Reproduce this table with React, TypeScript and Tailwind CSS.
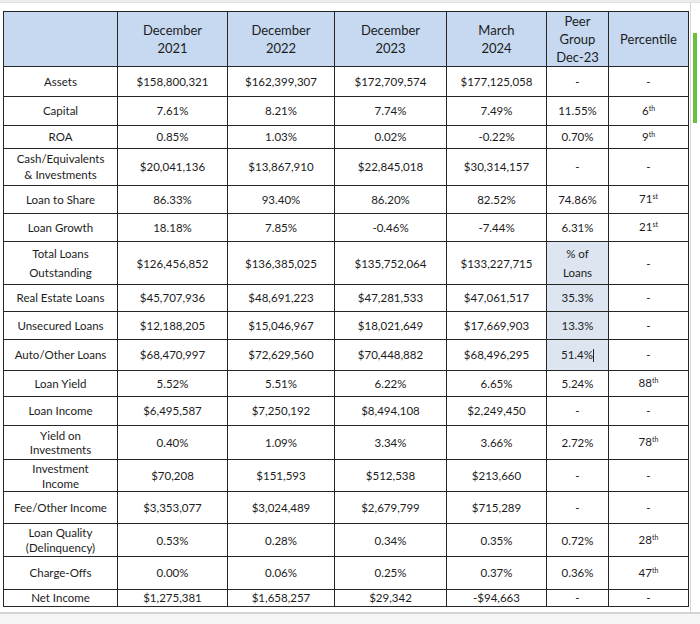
import React from "react";

type Row = {
  label: string[];
  vals: string[];
  peer: string[];
  pct: [string, string] | null;
  h: string;
  lh: string;
  hl?: boolean;
  cursor?: boolean;
};

const rows: Row[] = [
  { label: ["Assets"], vals: ["$158,800,321", "$162,399,307", "$172,709,574", "$177,125,058"], peer: ["-"], pct: null, h: "h-[30px]", lh: "leading-[16px]" },
  { label: ["Capital"], vals: ["7.61%", "8.21%", "7.74%", "7.49%"], peer: ["11.55%"], pct: ["6", "th"], h: "h-[29px]", lh: "leading-[16px]" },
  { label: ["ROA"], vals: ["0.85%", "1.03%", "0.02%", "-0.22%"], peer: ["0.70%"], pct: ["9", "th"], h: "h-[23px]", lh: "leading-[16px]" },
  { label: ["Cash/Equivalents", "& Investments"], vals: ["$20,041,136", "$13,867,910", "$22,845,018", "$30,314,157"], peer: ["-"], pct: null, h: "h-[37px]", lh: "leading-[16px]" },
  { label: ["Loan to Share"], vals: ["86.33%", "93.40%", "86.20%", "82.52%"], peer: ["74.86%"], pct: ["71", "st"], h: "h-[28px]", lh: "leading-[16px]" },
  { label: ["Loan Growth"], vals: ["18.18%", "7.85%", "-0.46%", "-7.44%"], peer: ["6.31%"], pct: ["21", "st"], h: "h-[28px]", lh: "leading-[16px]" },
  { label: ["Total Loans", "Outstanding"], vals: ["$126,456,852", "$136,385,025", "$135,752,064", "$133,227,715"], peer: ["% of", "Loans"], pct: null, h: "h-[43px]", lh: "leading-[19px]", hl: true },
  { label: ["Real Estate Loans"], vals: ["$45,707,936", "$48,691,223", "$47,281,533", "$47,061,517"], peer: ["35.3%"], pct: null, h: "h-[27px]", lh: "leading-[16px]", hl: true },
  { label: ["Unsecured Loans"], vals: ["$12,188,205", "$15,046,967", "$18,021,649", "$17,669,903"], peer: ["13.3%"], pct: null, h: "h-[28px]", lh: "leading-[16px]", hl: true },
  { label: ["Auto/Other Loans"], vals: ["$68,470,997", "$72,629,560", "$70,448,882", "$68,496,295"], peer: ["51.4%"], pct: null, h: "h-[31px]", lh: "leading-[16px]", hl: true, cursor: true },
  { label: ["Loan Yield"], vals: ["5.52%", "5.51%", "6.22%", "6.65%"], peer: ["5.24%"], pct: ["88", "th"], h: "h-[26px]", lh: "leading-[16px]" },
  { label: ["Loan Income"], vals: ["$6,495,587", "$7,250,192", "$8,494,108", "$2,249,450"], peer: ["-"], pct: null, h: "h-[29px]", lh: "leading-[16px]" },
  { label: ["Yield on", "Investments"], vals: ["0.40%", "1.09%", "3.34%", "3.66%"], peer: ["2.72%"], pct: ["78", "th"], h: "h-[34px]", lh: "leading-[14px]" },
  { label: ["Investment", "Income"], vals: ["$70,208", "$151,593", "$512,538", "$213,660"], peer: ["-"], pct: null, h: "h-[32px]", lh: "leading-[15px]" },
  { label: ["Fee/Other Income"], vals: ["$3,353,077", "$3,024,489", "$2,679,799", "$715,289"], peer: ["-"], pct: null, h: "h-[32px]", lh: "leading-[16px]" },
  { label: ["Loan Quality", "(Delinquency)"], vals: ["0.53%", "0.28%", "0.34%", "0.35%"], peer: ["0.72%"], pct: ["28", "th"], h: "h-[33px]", lh: "leading-[15px]" },
  { label: ["Charge-Offs"], vals: ["0.00%", "0.06%", "0.25%", "0.37%"], peer: ["0.36%"], pct: ["47", "th"], h: "h-[33px]", lh: "leading-[16px]" },
  { label: ["Net Income"], vals: ["$1,275,381", "$1,658,257", "$29,342", "-$94,663"], peer: ["-"], pct: null, h: "h-[17px]", lh: "leading-[14px]" },
];

const cell = "border border-[#262626] text-center align-middle p-0";

function Lines({ lines }: { lines: string[] }) {
  return (
    <>
      {lines.map((l, i) => (
        <div key={i}>{l}</div>
      ))}
    </>
  );
}

export default function App() {
  return (
    <div
      className="w-[700px] h-[624px] bg-white flex flex-col overflow-hidden text-[#1c1c1c]"
      style={{ fontFamily: "Lato, 'Open Sans', sans-serif" }}
    >
      <div className="h-[3px] bg-[#ececec] border-b border-[#e2e2e2]" />
      <div className="flex flex-row h-[609px]">
        <div className="pl-[3px] pt-[8px]">
          <table className="border-collapse table-fixed border-[1.5px] border-[#262626] text-[11.5px]">
            <colgroup>
              <col className="w-[114px]" />
              <col className="w-[110px]" />
              <col className="w-[107px]" />
              <col className="w-[112px]" />
              <col className="w-[100px]" />
              <col className="w-[62px]" />
              <col className="w-[80px]" />
            </colgroup>
            <thead>
              <tr className="h-[54px] bg-[#c6d9f0] text-[13px] leading-[18px]">
                <th className={cell + " font-normal"}></th>
                <th className={cell + " font-normal"}><Lines lines={["December", "2021"]} /></th>
                <th className={cell + " font-normal"}><Lines lines={["December", "2022"]} /></th>
                <th className={cell + " font-normal"}><Lines lines={["December", "2023"]} /></th>
                <th className={cell + " font-normal"}><Lines lines={["March", "2024"]} /></th>
                <th className={cell + " font-normal"}><Lines lines={["Peer", "Group", "Dec-23"]} /></th>
                <th className={cell + " font-normal"}>Percentile</th>
              </tr>
            </thead>
            <tbody>
              {rows.map((r, i) => (
                <tr key={i} className={r.h + " " + r.lh}>
                  <td className={cell}><Lines lines={r.label} /></td>
                  {r.vals.map((v, j) => (
                    <td key={j} className={cell}>{v}</td>
                  ))}
                  <td className={cell + (r.hl ? " bg-[#dde6f0]" : "")}>
                    {r.cursor ? (
                      <span className="inline-flex items-center">
                        51.4%
                        <span className="inline-block w-px h-[13px] bg-[#222]" />
                      </span>
                    ) : (
                      <Lines lines={r.peer} />
                    )}
                  </td>
                  <td className={cell}>
                    {r.pct ? (
                      <span>
                        {r.pct[0]}
                        <span className="relative top-[-4px] text-[7px]">{r.pct[1]}</span>
                      </span>
                    ) : (
                      "-"
                    )}
                  </td>
                </tr>
              ))}
            </tbody>
          </table>
        </div>
        <div className="ml-[1px] w-[10px] h-full border-l border-[#d6d6d6] flex flex-col">
          <div className="mt-[30px] ml-[2px] w-[4px] h-[90px] bg-[#6abf3f]" />
        </div>
      </div>
      <div className="flex-1 border-t-2 border-[#d4d4d4] bg-[#f6f6f6]" />
    </div>
  );
}
